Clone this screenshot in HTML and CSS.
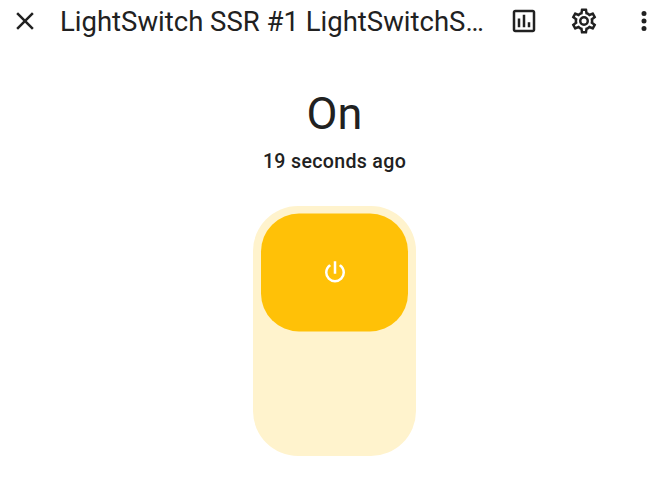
FILE: index.html
```html
<!DOCTYPE html>
<html lang="en">
<head>
<meta charset="utf-8">
<title>LightSwitch</title>
<link rel="stylesheet" href="styles.css">
</head>
<body>
<header class="bar">
  <svg class="icon close" viewBox="0 0 24 24"><path d="M19,6.41L17.59,5L12,10.59L6.41,5L5,6.41L10.59,12L5,17.59L6.41,19L12,13.41L17.59,19L19,17.59L13.41,12L19,6.41Z"/></svg>
  <h1 class="title">LightSwitch SSR #1 LightSwitchS…</h1>
  <svg class="icon chart" viewBox="0 0 24 24"><path d="M9 17H7V10H9V17M13 17H11V7H13V17M17 17H15V13H17V17M19 19H5V5H19V19.1M19 3H5C3.9 3 3 3.9 3 5V19C3 20.1 3.9 21 5 21H19C20.1 21 21 20.1 21 19V5C21 3.9 20.1 3 19 3Z"/></svg>
  <svg class="icon cog" viewBox="0 0 24 24"><path d="M12,8A4,4 0 0,1 16,12A4,4 0 0,1 12,16A4,4 0 0,1 8,12A4,4 0 0,1 12,8M12,10A2,2 0 0,0 10,12A2,2 0 0,0 12,14A2,2 0 0,0 14,12A2,2 0 0,0 12,10M10,22C9.75,22 9.54,21.82 9.5,21.58L9.13,18.93C8.5,18.68 7.96,18.34 7.44,17.94L4.95,18.95C4.73,19.03 4.46,18.95 4.34,18.73L2.34,15.27C2.21,15.05 2.27,14.78 2.46,14.63L4.57,12.97L4.5,12L4.57,11L2.46,9.37C2.27,9.22 2.21,8.95 2.34,8.73L4.34,5.27C4.46,5.05 4.73,4.96 4.95,5.05L7.44,6.05C7.96,5.66 8.5,5.32 9.13,5.07L9.5,2.42C9.54,2.18 9.75,2 10,2H14C14.25,2 14.46,2.18 14.5,2.42L14.87,5.07C15.5,5.32 16.04,5.66 16.56,6.05L19.05,5.05C19.27,4.96 19.54,5.05 19.66,5.27L21.66,8.73C21.79,8.95 21.73,9.22 21.54,9.37L19.43,11L19.5,12L19.43,13L21.54,14.63C21.73,14.78 21.79,15.05 21.66,15.27L19.66,18.73C19.54,18.95 19.27,19.04 19.05,18.95L16.56,17.95C16.04,18.34 15.5,18.68 14.87,18.93L14.5,21.58C14.46,21.82 14.25,22 14,22H10M11.25,4L10.88,6.61C9.68,6.86 8.62,7.5 7.85,8.39L5.44,7.35L4.69,8.65L6.8,10.2C6.4,11.37 6.4,12.64 6.8,13.8L4.68,15.36L5.43,16.66L7.86,15.62C8.63,16.5 9.68,17.14 10.87,17.38L11.24,20H12.76L13.13,17.39C14.32,17.14 15.37,16.5 16.14,15.62L18.57,16.66L19.32,15.36L17.2,13.81C17.6,12.64 17.6,11.37 17.2,10.2L19.31,8.65L18.56,7.35L16.15,8.39C15.38,7.5 14.32,6.86 13.12,6.62L12.75,4H11.25Z"/></svg>
  <svg class="icon dots" viewBox="0 0 24 24"><path d="M12,16A2,2 0 0,1 14,18A2,2 0 0,1 12,20A2,2 0 0,1 10,18A2,2 0 0,1 12,16M12,10A2,2 0 0,1 14,12A2,2 0 0,1 12,14A2,2 0 0,1 10,12A2,2 0 0,1 12,10M12,4A2,2 0 0,1 14,6A2,2 0 0,1 12,8A2,2 0 0,1 10,6A2,2 0 0,1 12,4Z"/></svg>
</header>
<main class="content">
  <p class="state">On</p>
  <p class="ago">19 seconds ago</p>
  <div class="switch">
    <div class="handle">
      <svg class="power" viewBox="0 0 24 24"><path d="M16.56,5.44L15.11,6.89C16.84,7.94 18,9.83 18,12A6,6 0 0,1 12,18A6,6 0 0,1 6,12C6,9.83 7.16,7.94 8.88,6.88L7.44,5.44C5.36,6.88 4,9.28 4,12A8,8 0 0,0 12,20A8,8 0 0,0 20,12C20,9.28 18.64,6.88 16.56,5.44M13,3H11V13H13"/></svg>
    </div>
  </div>
</main>
</body>
</html>
```
FILE: styles.css
```css
body {
  margin: 0;
  background: #fff;
  color: #212121;
  font-family: Roboto, sans-serif;
}
.bar {
  display: flex;
  align-items: center;
  height: 42px;
  padding-left: 10px;
}
.icon {
  flex: none;
  width: 30px;
  height: 30px;
  fill: #212121;
}
.title {
  width: 425px;
  margin: 0 24px 0 20px;
  padding-top: 2px;
  font-size: 27.5px;
  line-height: 42px;
  font-weight: 400;
  white-space: nowrap;
}
.cog,
.dots {
  margin-left: 30px;
}
.content {
  display: flex;
  flex-direction: column;
  align-items: center;
  padding: 49px 0 0 7px;
}
.state {
  margin: 0;
  font-size: 45px;
  line-height: 45px;
}
.ago {
  margin: 13px 0 0;
  font-size: 19.6px;
  line-height: 25px;
  font-weight: 500;
  letter-spacing: 0.32px;
}
.switch {
  box-sizing: border-box;
  width: 163px;
  height: 250px;
  margin-top: 32px;
  padding: 7px 8px;
  border-radius: 45px;
  background: #fff3cd;
}
.handle {
  display: flex;
  align-items: center;
  justify-content: center;
  height: 118px;
  border-radius: 38px;
  background: #ffc107;
  transform: translateY(0.5px);
}
.power {
  width: 30px;
  height: 30px;
  fill: #fff;
}
```
